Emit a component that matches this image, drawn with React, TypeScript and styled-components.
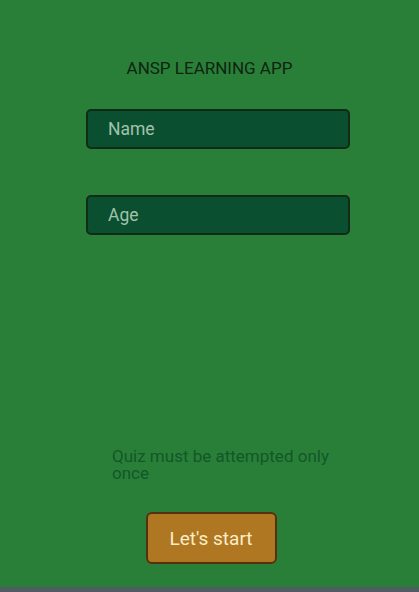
import styled, { createGlobalStyle } from "styled-components";

const GlobalStyle = createGlobalStyle`
  html, body {
    margin: 0;
    padding: 0;
    height: 100%;
  }
  body {
    font-family: Roboto, "Liberation Sans", sans-serif;
    background: #297f37;
  }
  #root {
    height: 100%;
  }
`;

const Screen = styled.div`
  width: 419px;
  height: 592px;
  display: flex;
  flex-direction: column;
  background: #297f37;
  overflow: hidden;
`;

const Content = styled.div`
  flex: 1;
  display: flex;
  flex-direction: column;
  align-items: center;
  padding-top: 58px;
`;

const Title = styled.h1`
  margin: 0;
  font-size: 17px;
  font-weight: 400;
  color: #0f2412;
  line-height: 20px;
`;

const Field = styled.input<{ $top: number }>`
  box-sizing: border-box;
  width: 264px;
  height: 40px;
  margin: ${(p) => p.$top}px 0 0 17px;
  padding: 0 0 0 20px;
  font-family: Roboto, "Liberation Sans", sans-serif;
  font-size: 17.5px;
  color: #e3efe6;
  background: #0a5030;
  border: 2px solid #112b17;
  border-radius: 5px;
  outline: none;
  &::placeholder {
    color: #a3c2ac;
  }
`;

const Note = styled.p`
  align-self: flex-start;
  width: 232px;
  margin: 213px 0 0 112px;
  font-size: 17px;
  line-height: 17px;
  color: #12572a;
`;

const StartButton = styled.button`
  box-sizing: border-box;
  width: 131px;
  height: 52px;
  margin: 30px 0 0 3px;
  font-family: Roboto, "Liberation Sans", sans-serif;
  font-size: 19px;
  color: #faeec6;
  background: #b07722;
  border: 2px solid #55310f;
  border-radius: 6px;
`;

const NavBar = styled.div`
  height: 5px;
  background: #4f5d62;
`;

export default function App() {
  return (
    <>
      <GlobalStyle />
      <Screen>
        <Content>
          <Title>ANSP LEARNING APP</Title>
          <Field $top={31} placeholder="Name" />
          <Field $top={46} placeholder="Age" />
          <Note>Quiz must be attempted only once</Note>
          <StartButton>Let's start</StartButton>
        </Content>
        <NavBar />
      </Screen>
    </>
  );
}
